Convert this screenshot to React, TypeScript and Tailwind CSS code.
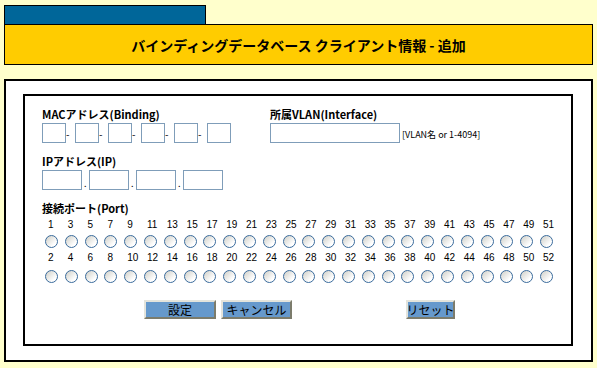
import React from "react";

const odd = Array.from({ length: 26 }, (_, i) => i * 2 + 1);
const even = Array.from({ length: 26 }, (_, i) => i * 2 + 2);

const Radio = () => (
  <span className="block w-[13px] h-[13px] rounded-full border border-[#3a6b9c] bg-[linear-gradient(135deg,#cfcfc8,#ffffff_75%)]" />
);

const PortRow = ({ nums }: { nums: number[] }) => (
  <div className="grid grid-cols-[repeat(26,19.8px)] text-[10px] leading-[11px] font-['Liberation_Sans',sans-serif]">
    {nums.map((n) => (
      <span key={n} className="pl-[3px]">
        {n}
      </span>
    ))}
  </div>
);

const RadioRow = () => (
  <div className="grid grid-cols-[repeat(26,19.8px)]">
    {odd.map((n) => (
      <Radio key={n} />
    ))}
  </div>
);

const Btn = ({ label, w }: { label: string; w: string }) => (
  <button
    className={`${w} h-[19px] p-0 flex items-center justify-center whitespace-nowrap bg-[#6699cc] text-[12px] leading-none text-black
      border-2 border-t-[#e4e4dc] border-l-[#e4e4dc] border-r-[#7c7c6c] border-b-[#7c7c6c]`}
  >
    {label}
  </button>
);

const App = () => {
  return (
    <div className="min-h-screen bg-[#ffffcc] px-[4px] pt-[5px] pb-[6px] font-['Noto_Sans_CJK_JP',sans-serif] text-black">
      <div className="w-[202px] h-[19px] bg-[#006699] border border-b-0 border-black" />
      <div className="h-[41px] bg-[#ffcc00] border border-black flex items-center justify-center">
        <h1 className="text-[14px] font-bold leading-none whitespace-pre">
          バインディングデータベース クライアント情報 - 追加
        </h1>
      </div>

      <div className="mt-[14px] border-2 border-black bg-white pt-[13px] pl-[17px] pr-[18px] pb-[14px]">
        <div className="border-2 border-black h-[252px] pl-[17px]">
          <div className="flex mt-[12px]">
            <div className="w-[228px]">
              <div className="text-[11px] leading-[12px] font-bold">MACアドレス(Binding)</div>
              <div className="flex items-center mt-[3px]">
                {[0, 1, 2, 3, 4, 5].map((i) => (
                  <React.Fragment key={i}>
                    <input className="w-[24px] h-[20px] border border-[#7f9db9] bg-white outline-none" />
                    {i < 5 && <span className="w-[9px] text-[10px] leading-none pt-[2px]">-</span>}
                  </React.Fragment>
                ))}
              </div>
            </div>
            <div>
              <div className="text-[11px] leading-[12px] font-bold">所属VLAN(Interface)</div>
              <div className="flex items-center mt-[3px]">
                <input className="w-[130px] h-[20px] border border-[#7f9db9] bg-white outline-none" />
                <span className="ml-[2px] text-[9px] leading-none pt-[2px]">[VLAN名 or 1-4094]</span>
              </div>
            </div>
          </div>

          <div className="mt-[12px] text-[11px] leading-[12px] font-bold">IPアドレス(IP)</div>
          <div className="flex items-end mt-[3px]">
            {[0, 1, 2, 3].map((i) => (
              <React.Fragment key={i}>
                <input className="w-[40px] h-[20px] border border-[#7f9db9] bg-white outline-none" />
                {i < 3 && <span className="w-[7px] text-[9px] leading-[12px] pl-[2px]">.</span>}
              </React.Fragment>
            ))}
          </div>

          <div className="mt-[12px] text-[11px] leading-[12px] font-bold">接続ポート(Port)</div>
          <div className="ml-[3px]">
            <div className="mt-[5px]">
              <PortRow nums={odd} />
            </div>
            <div className="mt-[5px]">
              <RadioRow />
            </div>
            <div className="mt-[4px]">
              <PortRow nums={even} />
            </div>
            <div className="mt-[7px]">
              <RadioRow />
            </div>
          </div>

          <div className="flex items-start mt-[17px] ml-[102px]">
            <Btn label="設定" w="w-[72px]" />
            <div className="ml-[5px]">
              <Btn label="キャンセル" w="w-[71px]" />
            </div>
            <div className="ml-[114px]">
              <Btn label="リセット" w="w-[49px]" />
            </div>
          </div>
        </div>
      </div>
    </div>
  );
};

export default App;
